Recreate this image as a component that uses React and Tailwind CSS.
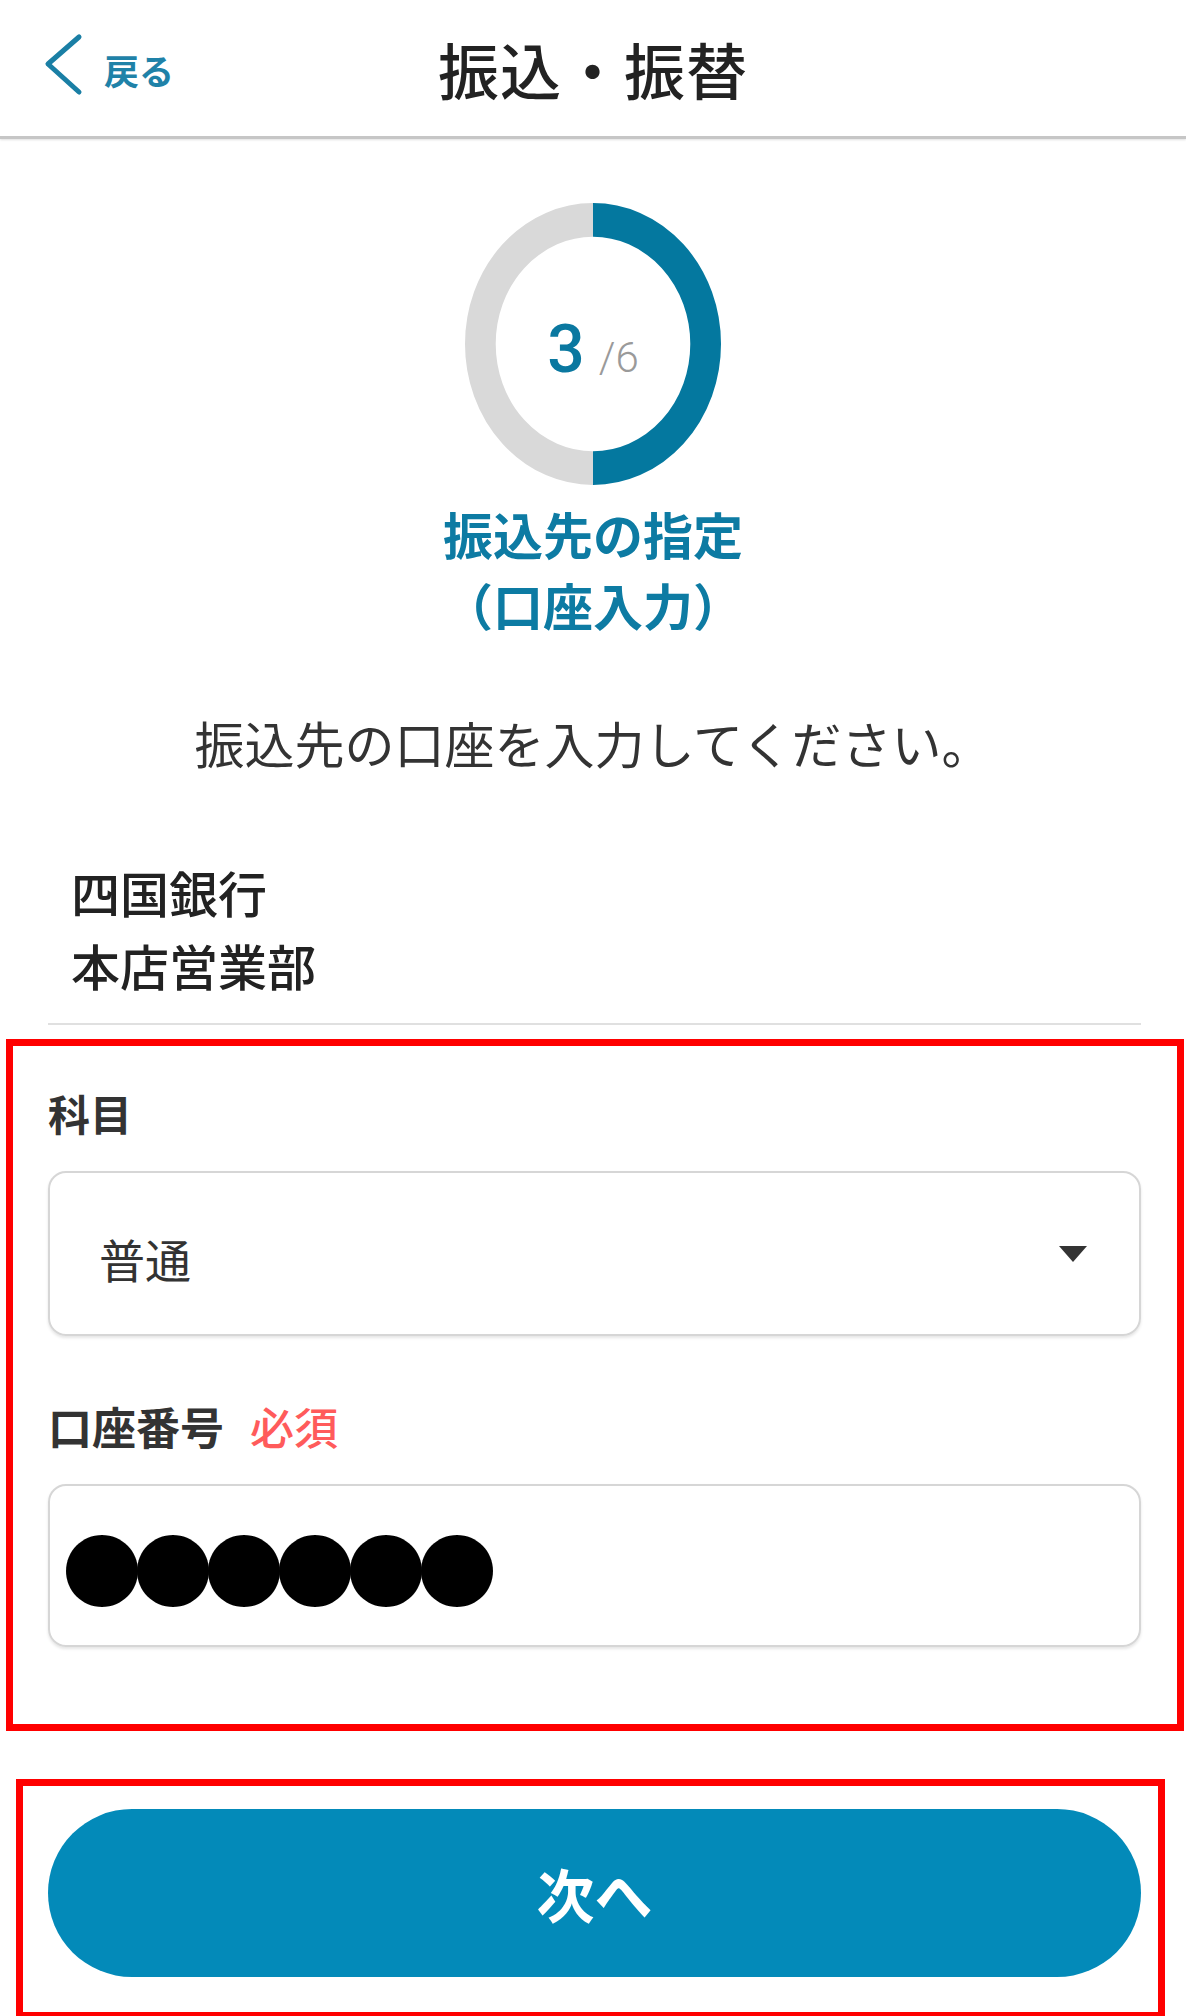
import { useState } from "react";

const TEAL = "#0d7aa2";

function ProgressRing({ step, total }) {
  return (
    <div className="relative w-[256px] h-[282px] mx-auto">
      <svg
        width="256"
        height="282"
        viewBox="0 0 100 100"
        preserveAspectRatio="none"
        className="block"
      >
        <path d="M50 94 A44 44 0 0 1 50 6" fill="none" stroke="#d9d9d9" strokeWidth="12" />
        <path d="M50 6 A44 44 0 0 1 50 94" fill="none" stroke="#04789f" strokeWidth="12" />
      </svg>
      <div className="absolute inset-0 flex items-baseline justify-center pt-[114px] font-['Roboto',sans-serif]">
        <span className="text-[66px] leading-none font-medium text-[#0a78a0]">{step}</span>
        <span className="text-[42px] leading-none text-[#9a9a9a] ml-[14px] font-light">/{total}</span>
      </div>
    </div>
  );
}

export default function App() {
  const [kind] = useState("普通");

  return (
    <div className="w-[1186px] h-[2016px] bg-white overflow-hidden font-['Noto_Sans_CJK_JP',sans-serif] text-[#333]">
      {/* Header */}
      <header className="h-[139px] border-b-[3px] border-[#c6c6c6] shadow-[0_1px_2px_rgba(0,0,0,0.12)] grid grid-cols-[1fr_auto_1fr] items-center">
        <button className="flex items-center pl-[44px] pb-[6px]" style={{ color: TEAL }}>
          <svg width="40" height="64" viewBox="0 0 40 64">
            <polyline
              points="35,4 4,31 35,59"
              fill="none"
              stroke="#1a7fa5"
              strokeWidth="5"
              strokeLinecap="round"
              strokeLinejoin="round"
            />
          </svg>
          <span className="ml-[20px] text-[35px] font-bold leading-none pt-[8px] text-[#1f82a8]">戻る</span>
        </button>
        <h1 className="text-[61px] font-medium leading-none text-[#222] tracking-[1px]">振込・振替</h1>
        <div />
      </header>

      {/* Progress */}
      <div className="mt-[64px]">
        <ProgressRing step={3} total={6} />
      </div>

      <div className="mt-[13px] text-center text-[50px] leading-[71px] font-bold text-[#0d7ba3]">
        <p>振込先の指定</p>
        <p>（口座入力）</p>
      </div>

      <p className="mt-[72px] text-center text-[50px] leading-[60px] text-[#333]">
        振込先の口座を入力してください。
      </p>

      {/* Bank */}
      <div className="mt-[83px] pl-[71px] text-[49px] leading-[73px] font-medium text-[#222]">
        <p>四国銀行</p>
        <p>本店営業部</p>
      </div>

      <div className="mt-[22px] ml-[48px] w-[1093px] h-[2px] bg-[#e0e0e0]" />

      {/* Form (highlighted) */}
      <div className="mt-[14px] ml-[6px] w-[1178px] border-[7px] border-[#ff0000] pl-[35px] pt-[42px] pb-[77px]">
        <label className="block text-[42px] leading-[50px] font-bold text-[#333]">科目</label>
        <div className="mt-[33px] w-[1093px] h-[165px] border-2 border-[#d6d6d6] rounded-[18px] shadow-[0_2px_3px_rgba(0,0,0,0.1)] flex items-center justify-between pl-[49px] pr-[52px]">
          <span className="text-[46px] leading-none pt-[8px] text-[#333]">{kind}</span>
          <svg width="28" height="16" viewBox="0 0 28 16">
            <polygon points="0,0 28,0 14,16" fill="#333" />
          </svg>
        </div>

        <div className="mt-[65px] flex items-center text-[44px] leading-[50px] font-bold">
          <span className="text-[#333]">口座番号</span>
          <span className="ml-[26px] text-[#ff5b5b] font-medium">必須</span>
        </div>
        <div className="mt-[33px] w-[1093px] h-[163px] border-2 border-[#d6d6d6] rounded-[18px] shadow-[0_2px_3px_rgba(0,0,0,0.1)] flex items-center pl-[12px]">
          <span className="text-[80px] leading-none tracking-[-9px] text-black">●●●●●●</span>
        </div>
      </div>

      {/* Next button (highlighted) */}
      <div className="mt-[48px] ml-[16px] w-[1149px] h-[240px] border-[7px] border-[#ff0000] pl-[25px] pt-[23px]">
        <button className="w-[1093px] h-[168px] rounded-full bg-[#038ab9] text-white text-[58px] font-bold leading-none">
          次へ
        </button>
      </div>
    </div>
  );
}
